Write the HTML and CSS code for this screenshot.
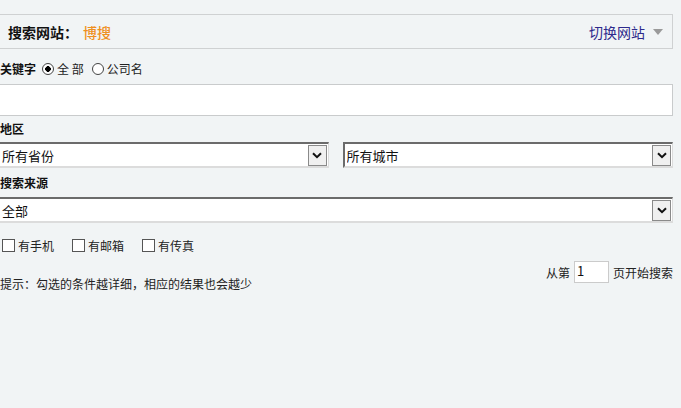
FILE: index.html
```html
<!DOCTYPE html>
<html lang="zh-CN">
<head>
<meta charset="utf-8">
<title>搜索</title>
<link rel="stylesheet" href="styles.css">
</head>
<body>
<form class="panel">
  <div class="site-bar">
    <div class="site-current"><span class="site-label">搜索网站：</span><span class="site-name">博搜</span></div>
    <a class="site-switch" href="#">切换网站<svg class="site-caret" width="10" height="6" viewBox="0 0 10 6"><path d="M0 0h10L5 6z" fill="#9a9a9a"/></svg></a>
  </div>

  <div class="kw-row">
    <span class="field-label">关键字</span>
    <label class="radio"><input type="radio" name="scope" checked><span>全 部</span></label>
    <label class="radio"><input type="radio" name="scope"><span>公司名</span></label>
  </div>
  <input class="kw-input" type="text">

  <div class="field-label block">地区</div>
  <div class="region-grid">
    <div class="select-box">
      <select><option>所有省份</option></select>
      <span class="select-btn"><svg width="10" height="7" viewBox="0 0 10 7"><path d="M1 1.2l4 4 4-4" fill="none" stroke="#111" stroke-width="2"/></svg></span>
    </div>
    <div class="select-box">
      <select><option>所有城市</option></select>
      <span class="select-btn"><svg width="10" height="7" viewBox="0 0 10 7"><path d="M1 1.2l4 4 4-4" fill="none" stroke="#111" stroke-width="2"/></svg></span>
    </div>
  </div>

  <div class="field-label block source">搜索来源</div>
  <div class="select-box">
    <select><option>全部</option></select>
    <span class="select-btn"><svg width="10" height="7" viewBox="0 0 10 7"><path d="M1 1.2l4 4 4-4" fill="none" stroke="#111" stroke-width="2"/></svg></span>
  </div>

  <div class="check-row">
    <label class="check"><input type="checkbox"><span>有手机</span></label>
    <label class="check"><input type="checkbox"><span>有邮箱</span></label>
    <label class="check"><input type="checkbox"><span>有传真</span></label>
  </div>

  <div class="foot-row">
    <p class="hint">提示：勾选的条件越详细，相应的结果也会越少</p>
    <div class="start-page">
      <span>从第</span>
      <input class="page-input" type="text" value="1">
      <span>页开始搜索</span>
    </div>
  </div>
</form>
</body>
</html>
```

FILE: styles.css
```css
html, body {
  margin: 0;
  background: #f1f4f5;
}

body {
  padding-top: 14px;
  font-family: "Noto Sans CJK SC", "Noto Sans", sans-serif;
  font-size: 12px;
  color: #222;
  overflow: hidden;
}

.panel {
  width: 675px;
  margin-left: -2px;
}

/* site header bar */
.site-bar {
  display: flex;
  align-items: center;
  justify-content: space-between;
  box-sizing: border-box;
  height: 35px;
  border: 1px solid #cfd1d2;
  padding: 0 9px 0 9px;
  font-size: 14px;
  line-height: 18px;
}

.site-label {
  font-weight: bold;
  color: #111;
}

.site-name {
  margin-left: 5px;
  color: #ef901f;
  font-weight: 500;
}

.site-switch {
  display: flex;
  align-items: center;
  color: #2e2a8c;
  text-decoration: none;
}

.site-caret {
  margin-left: 8px;
}

/* keyword */
.kw-row {
  display: flex;
  align-items: center;
  height: 20px;
  margin-top: 10px;
  line-height: 20px;
}

.field-label {
  font-weight: bold;
  color: #111;
  margin: 0 6px 0 2px;
}

.field-label.block {
  display: block;
  height: 18px;
  line-height: 18px;
  margin-top: 4px;
}

.field-label.source {
  margin-top: 6px;
}

.radio {
  display: flex;
  align-items: center;
  margin-right: 8px;
}

.radio input {
  appearance: none;
  box-sizing: border-box;
  width: 12px;
  height: 12px;
  margin: 0 3px 0 0;
  border: 1px solid #444;
  border-radius: 50%;
  background: #fff;
}

.radio input:checked {
  background: radial-gradient(circle, #000 0 2.6px, #fff 3px);
}

.kw-input {
  display: block;
  box-sizing: border-box;
  width: 100%;
  height: 32px;
  margin: 5px 0 0;
  border: 1px solid #c9cbcc;
  background: #fff;
  outline: none;
}

/* dropdowns */
.region-grid {
  display: grid;
  grid-template-columns: 1fr 1fr;
  column-gap: 14px;
  margin-top: 4px;
}

.select-box {
  position: relative;
  box-sizing: border-box;
  height: 26px;
  border-top: 2px solid #6b6b6b;
  border-left: 2px solid #6b6b6b;
  border-right: 1px solid #dcdcdc;
  border-bottom: 2px solid #dcdcdc;
  background: #fff;
}

.source + .select-box {
  margin-top: 5px;
}

.select-box select {
  appearance: none;
  display: block;
  width: 100%;
  height: 100%;
  margin: 0;
  padding: 0 0 0 2px;
  border: 0;
  background: transparent;
  font-family: "Noto Sans CJK SC", "Noto Sans", sans-serif;
  font-size: 13px;
  color: #111;
  outline: none;
}

.select-btn {
  position: absolute;
  top: 1px;
  right: 1px;
  bottom: 0;
  box-sizing: border-box;
  width: 19px;
  display: flex;
  align-items: center;
  justify-content: center;
  border: 1px solid #8a8a8a;
  background: #f0f0f0;
  pointer-events: none;
}

/* option checkboxes */
.check-row {
  display: flex;
  align-items: center;
  height: 20px;
  margin-top: 12px;
}

.check {
  display: flex;
  align-items: center;
  margin-right: 14px;
}

.check input {
  appearance: none;
  box-sizing: border-box;
  width: 13px;
  height: 13px;
  margin: 0 3px 0 4px;
  border: 1px solid #555;
  background: #fff;
}

/* footer */
.foot-row {
  display: flex;
  justify-content: space-between;
  align-items: flex-start;
}

.hint {
  margin: 21px 0 0 2px;
  line-height: 16px;
}

.start-page {
  display: flex;
  align-items: center;
  margin-top: 6px;
}

.page-input {
  box-sizing: border-box;
  width: 35px;
  height: 22px;
  margin: 0 4px;
  padding: 0 0 4px 2px;
  border: 1px solid #cbcbcb;
  background: #fff;
  font-family: "Noto Sans CJK SC", "Noto Sans", sans-serif;
  font-size: 13px;
  color: #111;
  outline: none;
}
```
